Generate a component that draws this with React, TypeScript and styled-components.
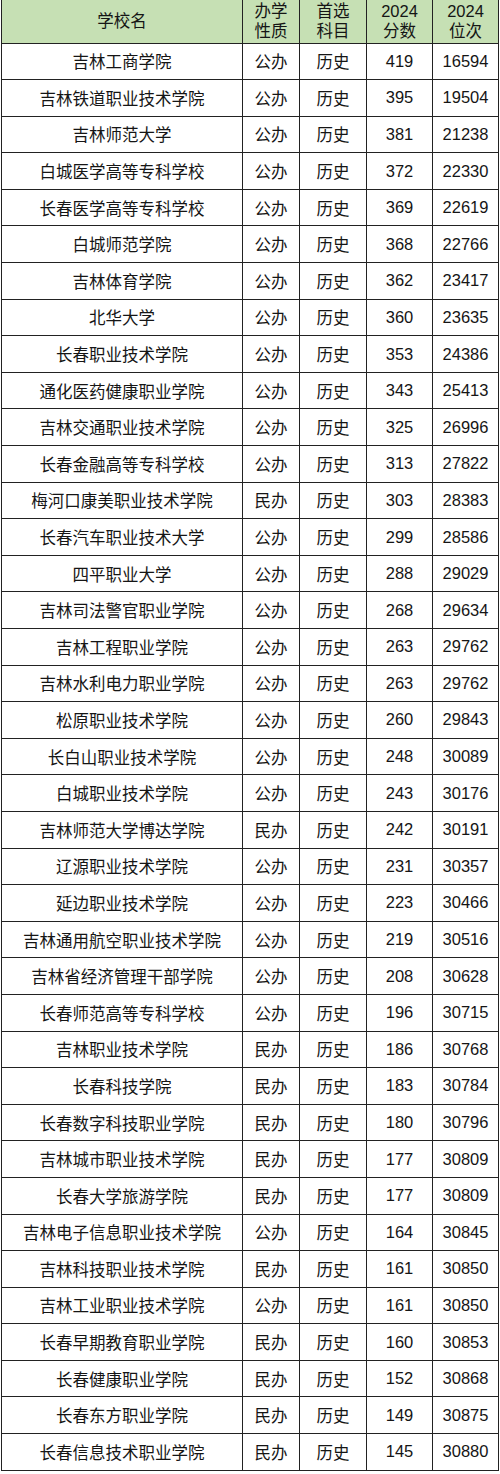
import styled, { createGlobalStyle } from "styled-components";

const GlobalStyle = createGlobalStyle`
  html, body {
    margin: 0;
    padding: 0;
    background: #ffffff;
  }
  body {
    font-family: "Liberation Sans", "Noto Sans CJK SC", Arial, sans-serif;
    color: #151515;
  }
`;

interface School {
  name: string;
  kind: string;
  subject: string;
  score: number;
  rank: number;
}

const rows: [string, string, number, number][] = [
  ["吉林工商学院", "公办", 419, 16594],
  ["吉林铁道职业技术学院", "公办", 395, 19504],
  ["吉林师范大学", "公办", 381, 21238],
  ["白城医学高等专科学校", "公办", 372, 22330],
  ["长春医学高等专科学校", "公办", 369, 22619],
  ["白城师范学院", "公办", 368, 22766],
  ["吉林体育学院", "公办", 362, 23417],
  ["北华大学", "公办", 360, 23635],
  ["长春职业技术学院", "公办", 353, 24386],
  ["通化医药健康职业学院", "公办", 343, 25413],
  ["吉林交通职业技术学院", "公办", 325, 26996],
  ["长春金融高等专科学校", "公办", 313, 27822],
  ["梅河口康美职业技术学院", "民办", 303, 28383],
  ["长春汽车职业技术大学", "公办", 299, 28586],
  ["四平职业大学", "公办", 288, 29029],
  ["吉林司法警官职业学院", "公办", 268, 29634],
  ["吉林工程职业学院", "公办", 263, 29762],
  ["吉林水利电力职业学院", "公办", 263, 29762],
  ["松原职业技术学院", "公办", 260, 29843],
  ["长白山职业技术学院", "公办", 248, 30089],
  ["白城职业技术学院", "公办", 243, 30176],
  ["吉林师范大学博达学院", "民办", 242, 30191],
  ["辽源职业技术学院", "公办", 231, 30357],
  ["延边职业技术学院", "公办", 223, 30466],
  ["吉林通用航空职业技术学院", "公办", 219, 30516],
  ["吉林省经济管理干部学院", "公办", 208, 30628],
  ["长春师范高等专科学校", "公办", 196, 30715],
  ["吉林职业技术学院", "民办", 186, 30768],
  ["长春科技学院", "民办", 183, 30784],
  ["长春数字科技职业学院", "民办", 180, 30796],
  ["吉林城市职业技术学院", "民办", 177, 30809],
  ["长春大学旅游学院", "民办", 177, 30809],
  ["吉林电子信息职业技术学院", "公办", 164, 30845],
  ["吉林科技职业技术学院", "民办", 161, 30850],
  ["吉林工业职业技术学院", "公办", 161, 30850],
  ["长春早期教育职业学院", "民办", 160, 30853],
  ["长春健康职业学院", "民办", 152, 30868],
  ["长春东方职业学院", "民办", 149, 30875],
  ["长春信息技术职业学院", "民办", 145, 30880],
];

const schools: School[] = rows.map(([name, kind, score, rank]) => ({
  name,
  kind,
  subject: "历史",
  score,
  rank,
}));

const Page = styled.div`
  padding: 0 2px 3px 1px;
`;

const Table = styled.table`
  width: 497px;
  border-collapse: collapse;
  table-layout: fixed;
  border: 1px solid #222;
  border-top-style: hidden;
  font-size: 16.5px;
`;

const Th = styled.th`
  background-color: #c6e0b4;
  border: 1px solid #222;
  font-weight: normal;
  text-align: center;
  line-height: 20px;
  padding: 0;
  vertical-align: middle;
`;

const Td = styled.td`
  border: 1px solid #222;
  text-align: center;
  padding: 0;
  vertical-align: middle;
  white-space: nowrap;
`;

const HeadRow = styled.tr`
  height: 43px;
`;

const Row = styled.tr`
  height: 36.6px;
`;

export default function App() {
  return (
    <Page>
      <GlobalStyle />
      <Table>
        <colgroup>
          <col style={{ width: 241 }} />
          <col style={{ width: 57 }} />
          <col style={{ width: 67 }} />
          <col style={{ width: 66 }} />
          <col style={{ width: 66 }} />
        </colgroup>
        <thead>
          <HeadRow>
            <Th>学校名</Th>
            <Th>
              办学
              <br />
              性质
            </Th>
            <Th>
              首选
              <br />
              科目
            </Th>
            <Th>
              2024
              <br />
              分数
            </Th>
            <Th>
              2024
              <br />
              位次
            </Th>
          </HeadRow>
        </thead>
        <tbody>
          {schools.map((s) => (
            <Row key={s.name}>
              <Td>{s.name}</Td>
              <Td>{s.kind}</Td>
              <Td>{s.subject}</Td>
              <Td>{s.score}</Td>
              <Td>{s.rank}</Td>
            </Row>
          ))}
        </tbody>
      </Table>
    </Page>
  );
}
